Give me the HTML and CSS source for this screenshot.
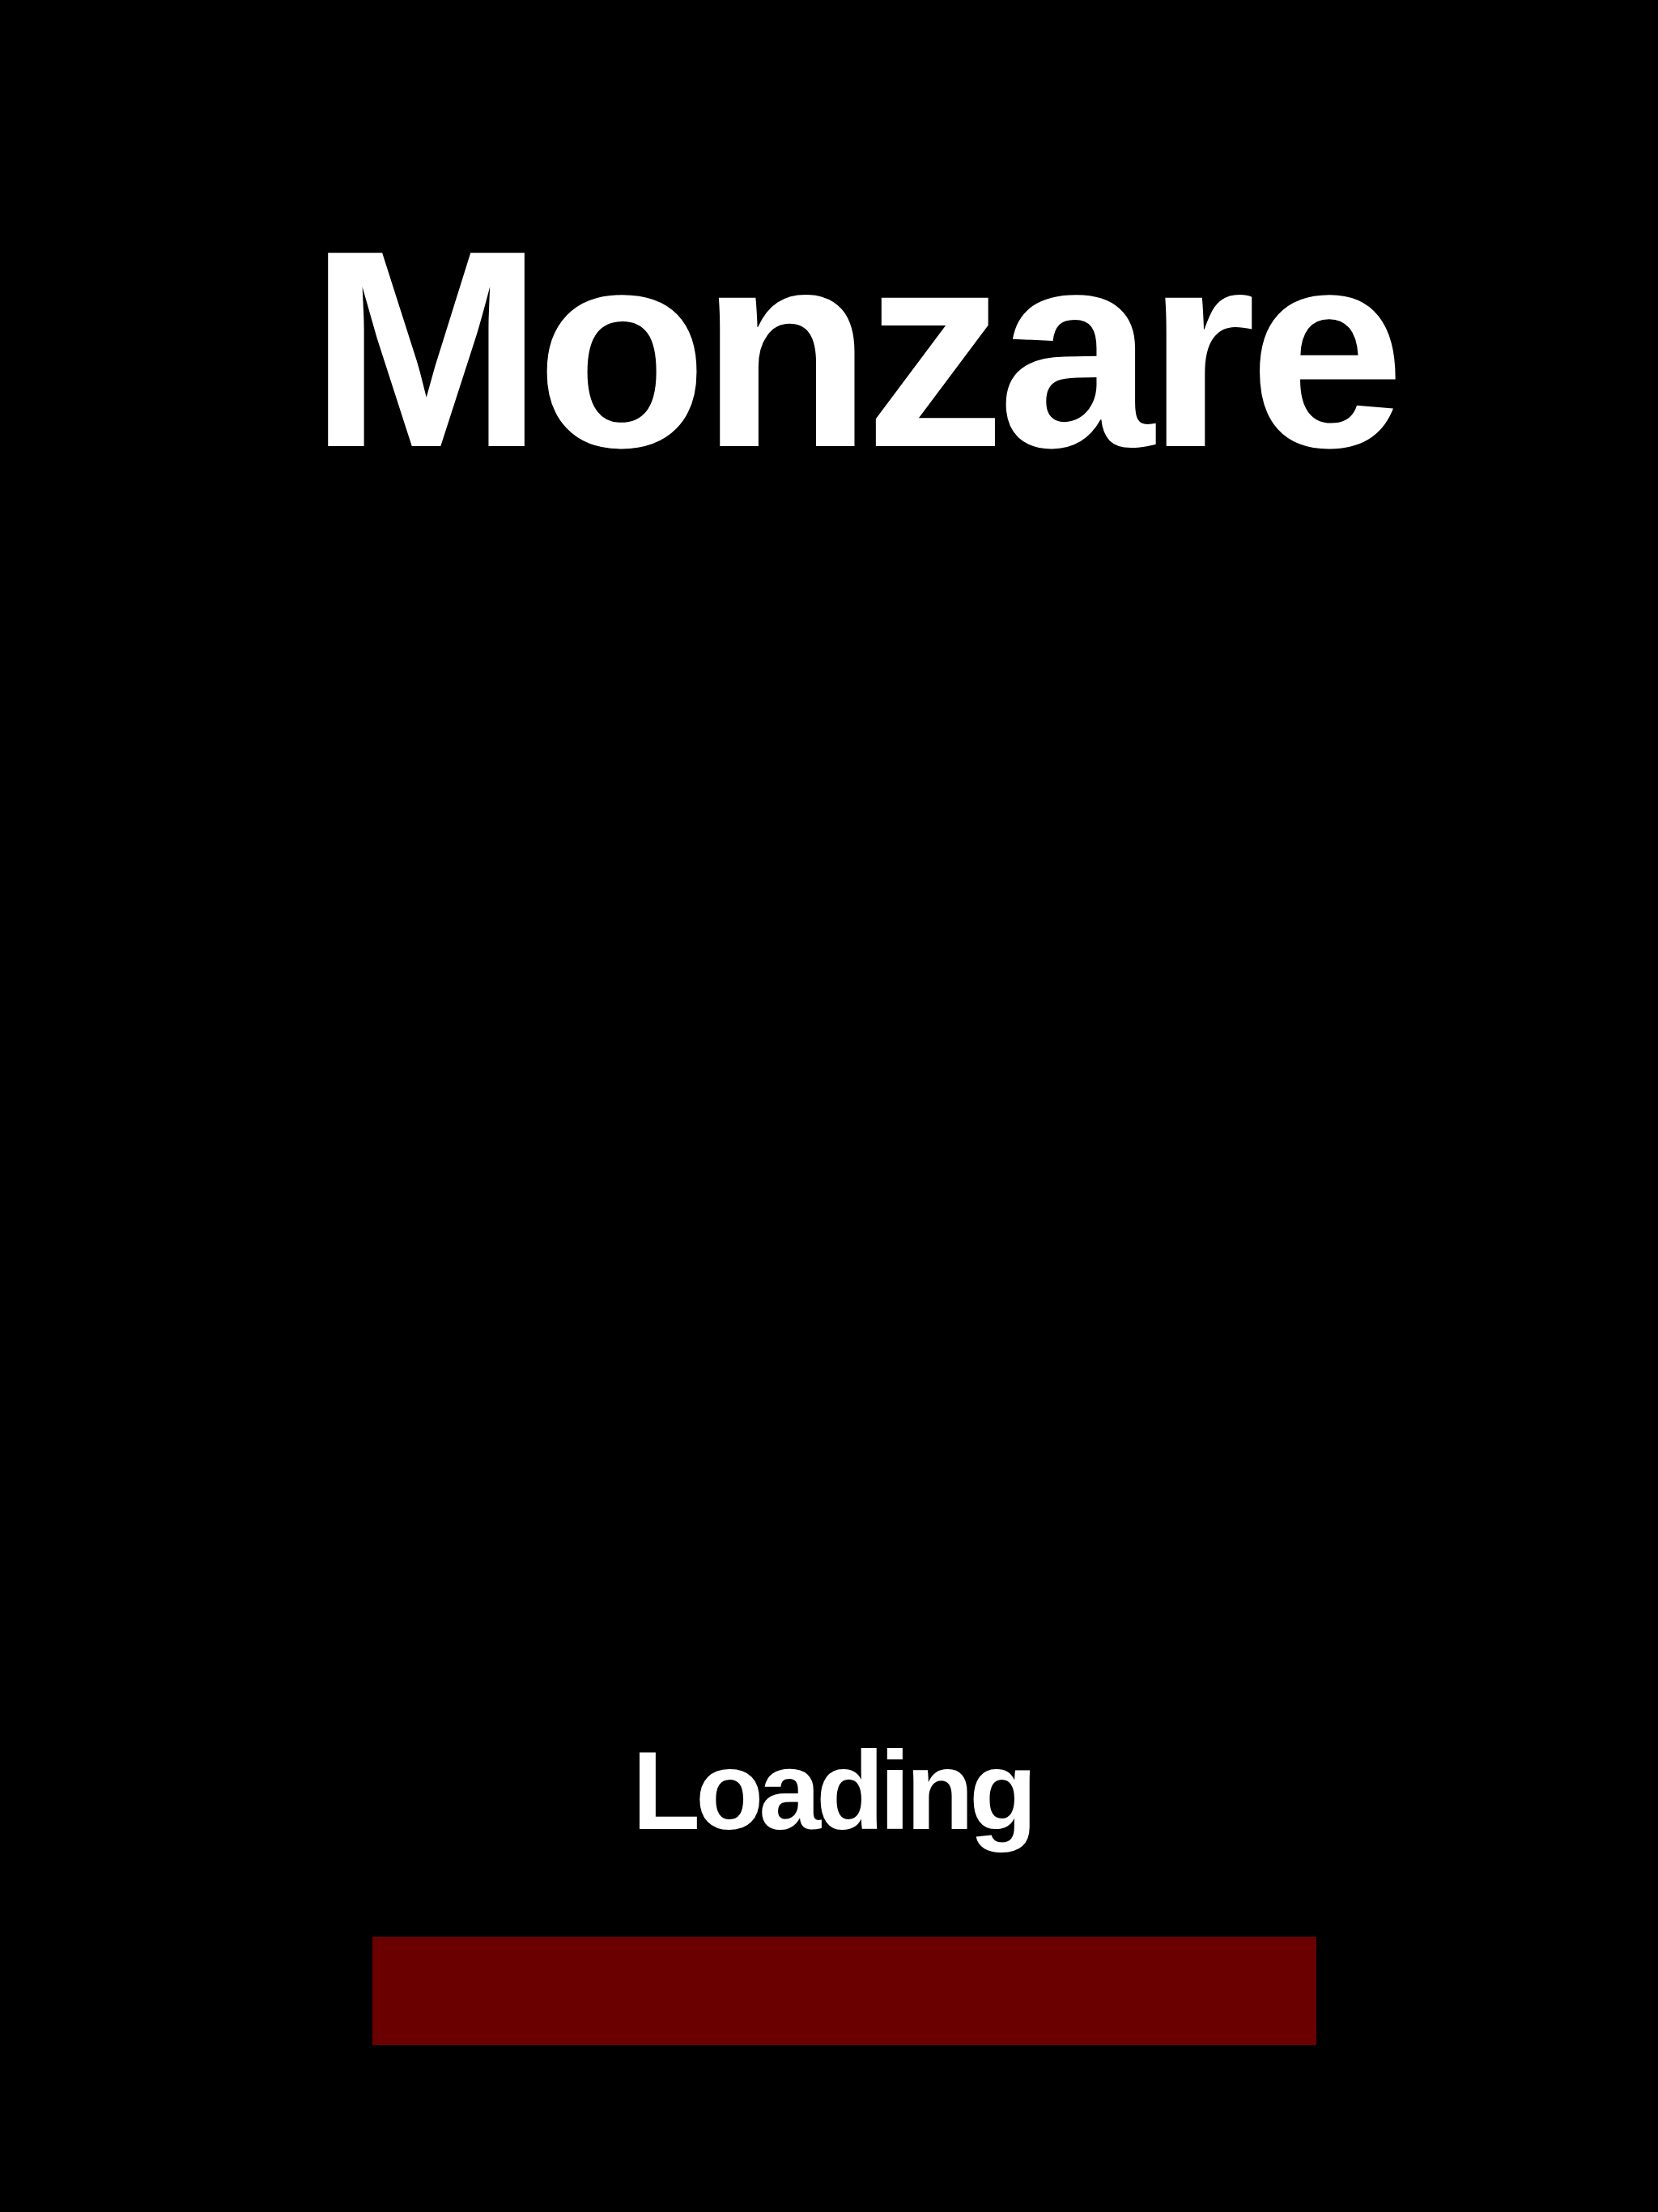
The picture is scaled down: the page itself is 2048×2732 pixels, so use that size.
FILE: index.html
```html
<!DOCTYPE html>
<html lang="en">
<head>
<meta charset="utf-8">
<title>Monzare</title>
<link rel="stylesheet" href="styles.css">
</head>
<body>
<main class="screen">
  <h1 class="title">Monzare</h1>
  <div class="loader">
    <p class="loading-label">Loading</p>
    <div class="progress-bar"></div>
  </div>
</main>
</body>
</html>
```

FILE: styles.css
```css
html, body {
  margin: 0;
  padding: 0;
  background: #000000;
}

.screen {
  width: 2048px;
  height: 2732px;
  display: flex;
  flex-direction: column;
  background: #000000;
  font-family: "Liberation Sans", Arial, sans-serif;
  color: #ffffff;
}

.title {
  margin: 258px 0 0 0;
  padding-left: 382px;
  font-size: 347px;
  line-height: 1;
  font-weight: 700;
  letter-spacing: -9px;
  white-space: nowrap;
}

.loader {
  margin-top: 1537px;
  display: flex;
  flex-direction: column;
}

.loading-label {
  margin: 0;
  text-align: center;
  padding-left: 8px;
  font-size: 138px;
  line-height: 1;
  font-weight: 700;
  letter-spacing: -6px;
}

.progress-bar {
  margin-top: 112px;
  margin-left: 460px;
  width: 1166px;
  height: 134px;
  background: #6b0000;
}
```
